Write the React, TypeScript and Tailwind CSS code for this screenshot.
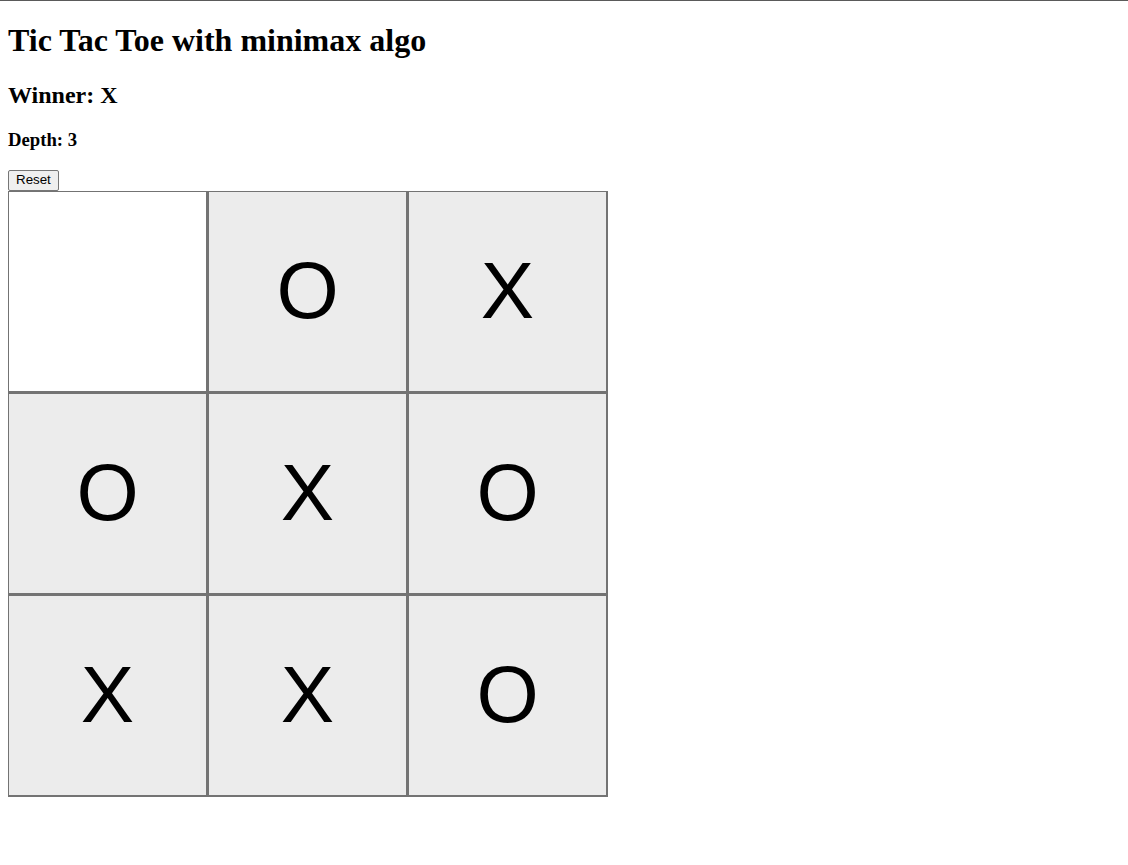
import React from "react";

const board: string[][] = [
  ["", "O", "X"],
  ["O", "X", "O"],
  ["X", "X", "O"],
];

export default function App() {
  return (
    <div className="min-h-[865px] bg-white border-t border-[#5a5a5a] text-black" style={{ fontFamily: '"Liberation Serif", "Times New Roman", serif' }}>
      <div className="-mt-px px-2 pt-[21.5px]">
        <h1 className="text-[32px] font-bold leading-[normal] mb-[23.44px]">Tic Tac Toe with minimax algo</h1>
        <h2 className="text-[24px] font-bold leading-[normal] mb-[19.92px]">Winner: X</h2>
        <h3 className="text-[18.72px] font-bold leading-[normal] mb-[18.72px]">Depth: 3</h3>
        <div className="h-[21px] flex items-start">
          <button
            className="h-[21px] px-[7px] text-[13.33px] leading-none bg-[#efefef] border border-[#767676] rounded-[2px] hover:bg-[#e5e5e5]"
            style={{ fontFamily: '"Liberation Sans", Arial, sans-serif' }}
          >
            Reset
          </button>
        </div>
        <div className="flex flex-col w-[600px]">
          {board.map((row, r) => (
            <div key={r} className="flex">
              {row.map((cell, c) => (
                <button
                  key={c}
                  className={`w-[200px] h-[202px] border-t border-l border-r-2 border-b-2 border-[#737373] flex items-center justify-center text-[80px] leading-none text-black ${
                    cell ? "bg-[#ececec]" : "bg-white"
                  }`}
                  style={{ fontFamily: '"Liberation Sans", Arial, sans-serif' }}
                >
                  {cell}
                </button>
              ))}
            </div>
          ))}
        </div>
      </div>
    </div>
  );
}
